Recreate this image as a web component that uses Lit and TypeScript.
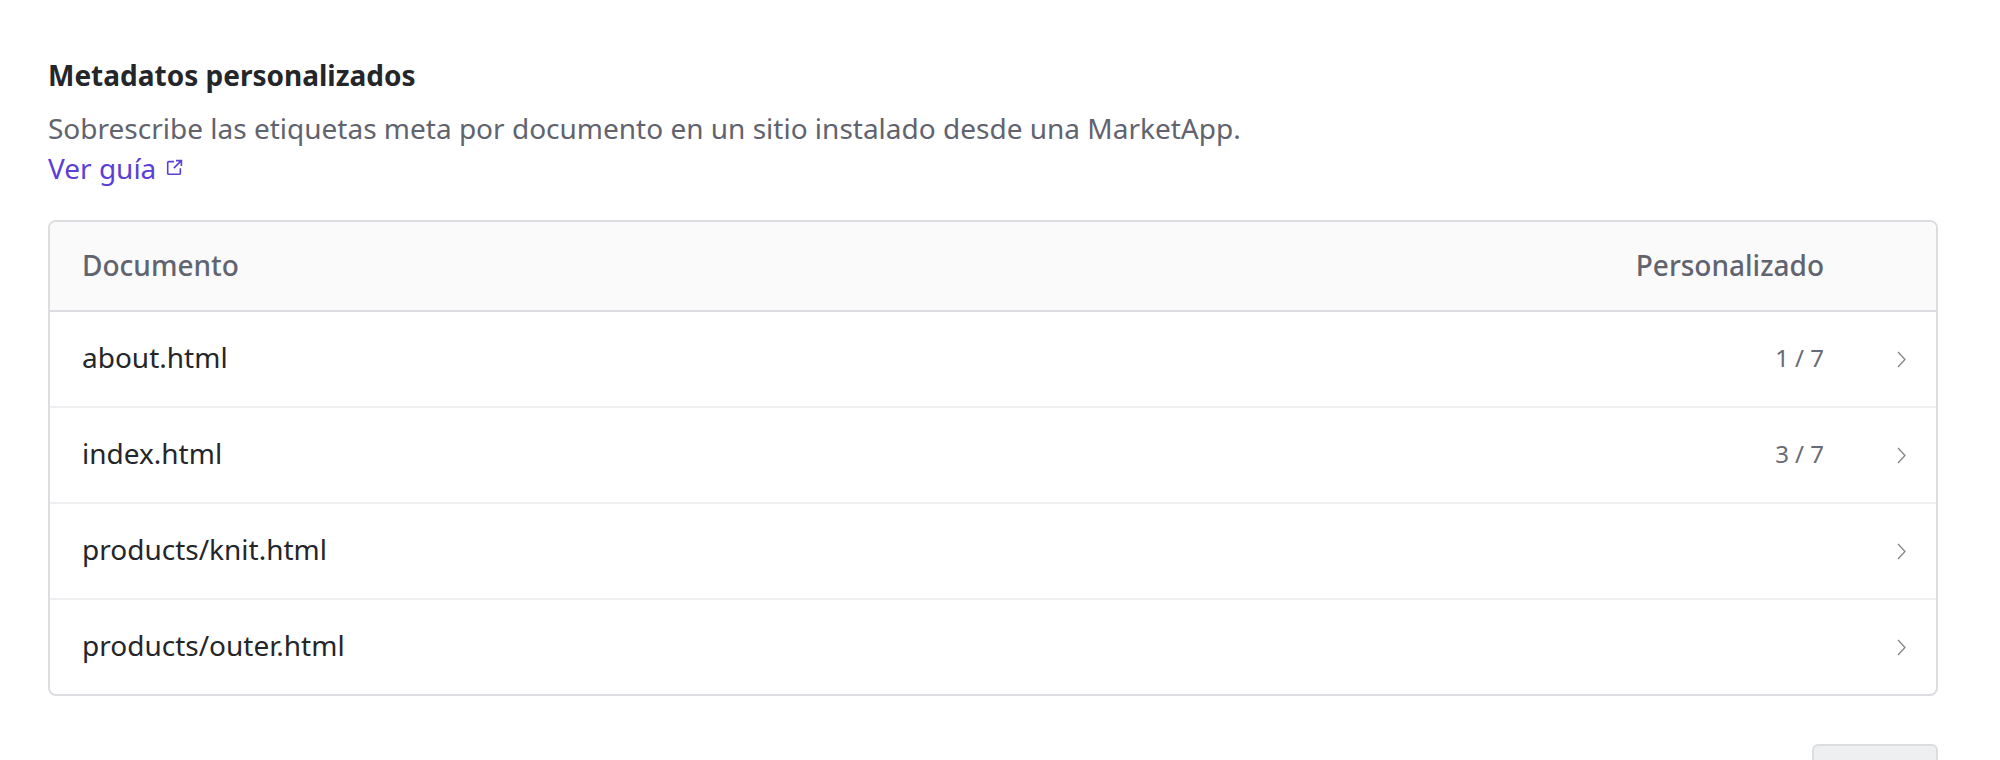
import { LitElement, html, css, svg } from "lit";
import { customElement } from "lit/decorators.js";

const rows = [
  { name: "about.html", count: "1 / 7" },
  { name: "index.html", count: "3 / 7" },
  { name: "products/knit.html", count: "" },
  { name: "products/outer.html", count: "" },
];

const chevron = svg`<path d="M1 1l7 7.5-7 7.5" fill="none" stroke="#85868c" stroke-width="1.3"/>`;
const ext = svg`<path d="M7.5 2.5H2.6a1 1 0 0 0-1 1v9.9a1 1 0 0 0 1 1h9.9a1 1 0 0 0 1-1V8.8M9.4 1.5h5.1v5.1M14.2 1.8 7.4 8.6" fill="none" stroke="#5b3fd6" stroke-width="1.5"/>`;

@customElement("app-root")
export class AppRoot extends LitElement {
  static styles = css`
    :host { display: block; height: 760px; overflow: hidden; background: #fff; font-family: "Noto Sans", sans-serif; }
    .page { padding: 57px 62px 0 48px; display: flex; flex-direction: column; }
    h2 { margin: 0; font-size: 28px; line-height: 36px; font-weight: 700; color: #25262a; }
    .desc { margin: 15px 0 0; font-size: 28px; line-height: 40px; color: #61636e; }
    .link { display: flex; align-items: center; gap: 10px; font-size: 28px; line-height: 40px; color: #5b3fd6; }
    .link svg { width: 17px; height: 17px; margin-top: -2px; }
    .card { margin-top: 32px; border: 2px solid #dcdde0; border-radius: 8px; overflow: hidden; }
    .row { display: grid; grid-template-columns: 1fr auto 32px; column-gap: 50px; align-items: center; box-sizing: border-box; padding: 0 30px 3px 32px; height: 96px; border-top: 2px solid #eeeff0; font-size: 28px; color: #25262a; }
    .row.head { height: 90px; border-top: 0; border-bottom: 2px solid #dcdde0; background: #fafafb; color: #61646f; font-weight: 500; }
    .row.head + .row { border-top: 0; height: 94px; }
    .name { margin-bottom: 2px; }
    .count { font-size: 24px; color: #686a74; text-align: right; }
    .chev { width: 9px; height: 17px; justify-self: end; margin-top: 3px; }
    .actions { display: flex; justify-content: flex-end; margin-top: 48px; }
    .btn { width: 126px; height: 52px; box-sizing: border-box; border: 2px solid #dcdde0; border-radius: 6px; background: #eeeff0; }
  `;

  render() {
    return html`<div class="page">
      <h2>Metadatos personalizados</h2>
      <p class="desc">Sobrescribe las etiquetas meta por documento en un sitio instalado desde una MarketApp.</p>
      <div class="link"><span>Ver guía</span><svg viewBox="0 0 16 16">${ext}</svg></div>
      <div class="card">
        <div class="row head"><span>Documento</span><span>Personalizado</span><span></span></div>
        ${rows.map(
          (r) => html`<div class="row"><span class="name">${r.name}</span><span class="count">${r.count}</span><svg class="chev" viewBox="0 0 9 17">${chevron}</svg></div>`
        )}
      </div>
      <div class="actions"><div class="btn"></div></div>
    </div>`;
  }
}
